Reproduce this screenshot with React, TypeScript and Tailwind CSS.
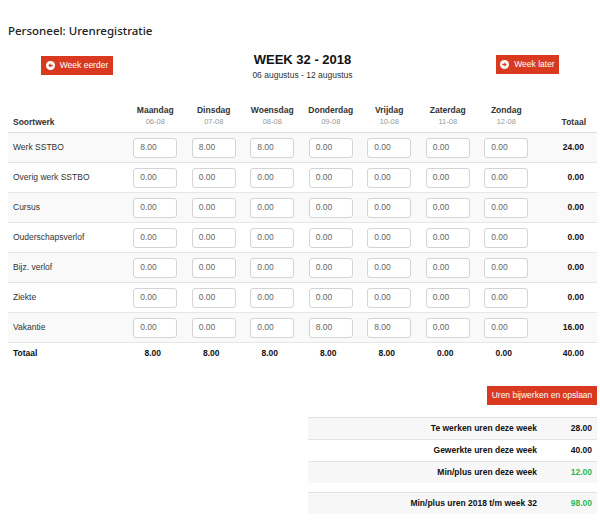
const days = [
  { name: 'Maandag', date: '06-08' },
  { name: 'Dinsdag', date: '07-08' },
  { name: 'Woensdag', date: '08-08' },
  { name: 'Donderdag', date: '09-08' },
  { name: 'Vrijdag', date: '10-08' },
  { name: 'Zaterdag', date: '11-08' },
  { name: 'Zondag', date: '12-08' },
];

const rows = [
  { label: 'Werk SSTBO', hours: ['8.00', '8.00', '8.00', '0.00', '0.00', '0.00', '0.00'], total: '24.00' },
  { label: 'Overig werk SSTBO', hours: ['0.00', '0.00', '0.00', '0.00', '0.00', '0.00', '0.00'], total: '0.00' },
  { label: 'Cursus', hours: ['0.00', '0.00', '0.00', '0.00', '0.00', '0.00', '0.00'], total: '0.00' },
  { label: 'Ouderschapsverlof', hours: ['0.00', '0.00', '0.00', '0.00', '0.00', '0.00', '0.00'], total: '0.00' },
  { label: 'Bijz. verlof', hours: ['0.00', '0.00', '0.00', '0.00', '0.00', '0.00', '0.00'], total: '0.00' },
  { label: 'Ziekte', hours: ['0.00', '0.00', '0.00', '0.00', '0.00', '0.00', '0.00'], total: '0.00' },
  { label: 'Vakantie', hours: ['0.00', '0.00', '0.00', '8.00', '8.00', '0.00', '0.00'], total: '16.00' },
];

const dayTotals = ['8.00', '8.00', '8.00', '8.00', '8.00', '0.00', '0.00'];

const summary = [
  { label: 'Te werken uren deze week', value: '28.00', green: false },
  { label: 'Gewerkte uren deze week', value: '40.00', green: false },
  { label: 'Min/plus uren deze week', value: '12.00', green: true },
];

const grid = 'grid grid-cols-[118px_repeat(7,58.5px)_1fr] items-center';

const CircleArrow = ({ dir }: { dir: 'left' | 'right' }) => (
  <svg width="9" height="9" viewBox="0 0 16 16">
    <circle cx="8" cy="8" r="8" fill="#fff" />
    {dir === 'left' ? (
      <path d="M4 8 L8 4 L8 6.5 L12 6.5 L12 9.5 L8 9.5 L8 12 Z" fill="#d9391f" />
    ) : (
      <path d="M12 8 L8 4 L8 6.5 L4 6.5 L4 9.5 L8 9.5 L8 12 Z" fill="#d9391f" />
    )}
  </svg>
);

const HourInput = ({ value }: { value: string }) => (
  <div className="mx-auto flex h-[20px] w-[44px] items-center rounded-[3px] border border-[#d4d4d4] bg-white px-[6px] text-[8.5px] text-[#666]">
    {value}
  </div>
);

export default function App() {
  return (
    <div className="min-h-[521px] bg-white pl-2 pr-[3px] pt-[24px] text-[#333] font-['Liberation_Sans',Arial,sans-serif]">
      <h1 className="text-[11.5px] leading-[14px] font-medium text-[#222] font-['Noto_Sans',sans-serif]">
        Personeel: Urenregistratie
      </h1>

      {/* Week navigation */}
      <div className="mt-[14px] grid grid-cols-3">
        <button className="mt-[4px] ml-[33px] flex h-[19px] w-[72px] items-center justify-center gap-[5px] justify-self-start bg-[#d9391f] text-[8.5px] text-white">
          <CircleArrow dir="left" />
          Week eerder
        </button>
        <div className="text-center">
          <div className="text-[13px] leading-[16px] font-bold text-[#111]">WEEK 32 - 2018</div>
          <div className="mt-[1px] text-[8.5px] leading-[12px] text-[#333]">06 augustus - 12 augustus</div>
        </div>
        <button className="mt-[3px] mr-[38px] flex h-[19px] w-[63px] items-center justify-center gap-[5px] justify-self-end bg-[#d9391f] text-[8.5px] text-white">
          <CircleArrow dir="right" />
          Week later
        </button>
      </div>

      {/* Hours table */}
      <div className="mt-[19px]">
        <div className={`${grid} items-end border-b border-[#ddd] pt-[4px] pb-[4px] text-[8.5px] leading-[12px]`}>
          <div className="pl-[5px] font-bold">Soortwerk</div>
          {days.map((d) => (
            <div key={d.name} className="text-center">
              <div className="font-bold">{d.name}</div>
              <div className="text-[7.5px] text-[#999]">{d.date}</div>
            </div>
          ))}
          <div className="pr-[11px] text-right font-bold">Totaal</div>
        </div>

        {rows.map((r, i) => (
          <div
            key={r.label}
            className={`${grid} h-[30px] border-b border-[#e6e6e6] text-[8.5px] ${i % 2 === 0 ? 'bg-[#f9f9f9]' : 'bg-white'}`}
          >
            <div className="pl-[5px]">{r.label}</div>
            {r.hours.map((h, j) => (
              <HourInput key={j} value={h} />
            ))}
            <div className="pr-[13px] text-right font-bold text-[#111]">{r.total}</div>
          </div>
        ))}

        <div className={`${grid} h-[21px] text-[8.5px] font-bold text-[#111]`}>
          <div className="pl-[5px]">Totaal</div>
          {dayTotals.map((t, j) => (
            <div key={j} className="pr-[5px] text-center">
              {t}
            </div>
          ))}
          <div className="pr-[13px] text-right">40.00</div>
        </div>
      </div>

      {/* Save + summary */}
      <div className="mt-[22px] flex justify-end">
        <button className="flex h-[19px] w-[110px] items-center justify-center bg-[#d9391f] text-[8.5px] text-white">
          Uren bijwerken en opslaan
        </button>
      </div>

      <div className="mt-[12px] ml-auto w-[289px] text-[8.5px] font-bold text-[#111]">
        {summary.map((s, i) => (
          <div
            key={s.label}
            className={`grid h-[22px] grid-cols-[1fr_60px] items-center border-t border-[#e2e2e2] ${i % 2 === 0 ? 'bg-[#f7f7f7]' : 'bg-white'}`}
          >
            <div className="text-right">{s.label}</div>
            <div className={`pr-[5px] text-right ${s.green ? 'text-[#2db84d]' : ''}`}>{s.value}</div>
          </div>
        ))}
        <div className="mt-[9px] grid h-[22px] grid-cols-[1fr_60px] items-center border-t border-[#e2e2e2] bg-[#f7f7f7]">
          <div className="text-right">Min/plus uren 2018 t/m week 32</div>
          <div className="pr-[5px] text-right text-[#2db84d]">98.00</div>
        </div>
      </div>
    </div>
  );
}
